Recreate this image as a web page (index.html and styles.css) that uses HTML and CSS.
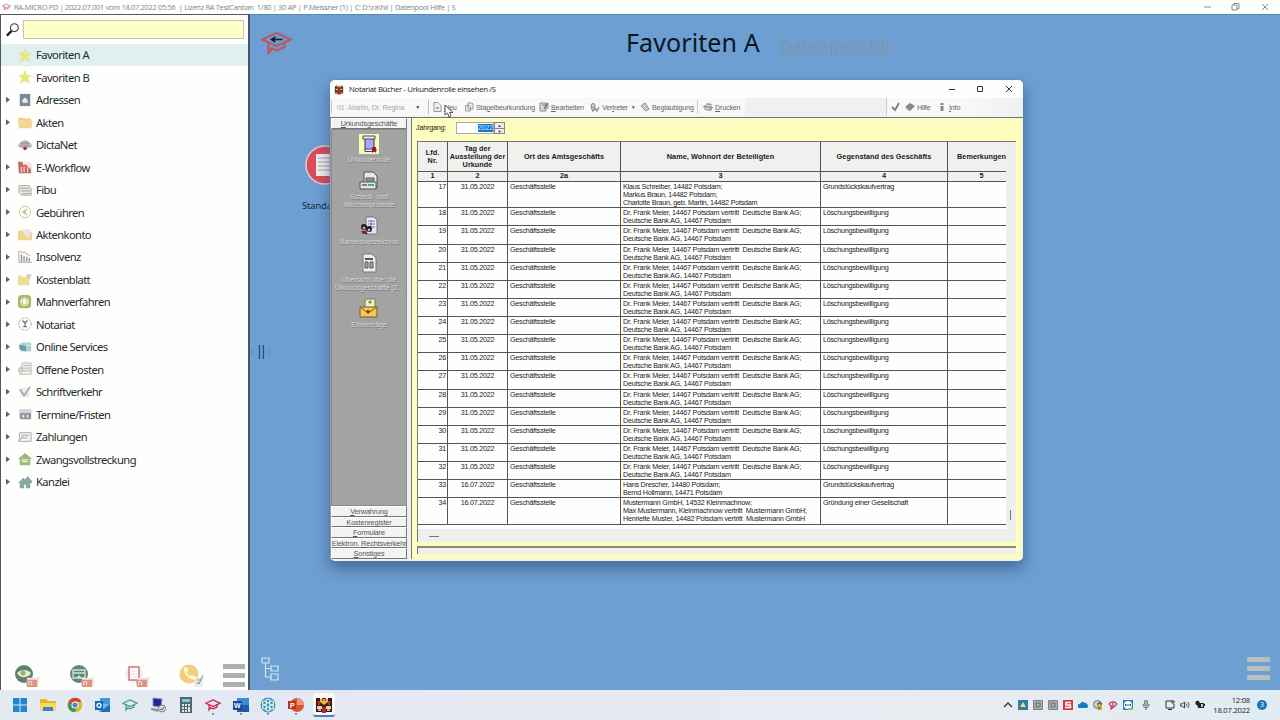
FILE: index.html
```html
<!DOCTYPE html>
<html lang="de">
<head>
<meta charset="utf-8">
<title>RA-MICRO</title>
<link rel="stylesheet" href="styles.css">
</head>
<body>
<svg class="defs">
  <symbol id="cap" viewBox="0 0 32 24"><path d="M2 8.500 16 2l14 6.500L16 15zM8 11.500V22l3.500-4.500 4.500 2 8-3.500v-4" fill="none" stroke="currentColor" stroke-width="2.400"/></symbol>
  <symbol id="star" viewBox="0 0 16 16"><path d="M8 1l2 5h5l-4 3.500 2 5.500-5-3-5 3 2-5.500L1 6h5z" fill="#eeea66" stroke="#d8d894" stroke-width=".7"/></symbol>
  <symbol id="mini" viewBox="0 0 16 14"><path d="M2 3h11l3-2-2 12H3z" fill="#f0e4df"/><path d="M1 5h12v8H2z" fill="#dc9484"/><path d="M4 7v4M7 7v4M4 7h2" stroke="#f7ded7" stroke-width="1.300"/></symbol>
</svg>

<header class="appbar">
  <svg class="appbar-logo" color="#d5495c"><use href="#cap"/></svg>
  <span class="appbar-title">RA-MICRO PD | 2022.07.001 vom 18.07.2022 05:56 &nbsp;| Lizenz RA TestCantian &nbsp;1/80 | 30 AP | P.Meissner (1) | C: D:\ra\hil | Datenpool Hilfe | S</span>
  <svg class="appbar-buttons" viewBox="0 0 64 10"><path d="M0 5h7M28 3h5v5h-5zM30 3V1.500h5v5h-2M58 2l6 6M64 2l-6 6" fill="none" stroke="#8a8a8a"/></svg>
</header>

<main class="desk">
  <nav class="side">
    <div class="search">
      <svg viewBox="0 0 16 16"><circle cx="10" cy="5.500" r="4.200" fill="none" stroke="#444" stroke-width="1.200"/><path d="M7 9l-5 5" stroke="#222" stroke-width="2.500"/></svg>
      <div class="search-field"></div>
    </div>
    <ul class="tree" id="tree"></ul>
    <div class="side-foot">
      <svg class="quick" viewBox="0 0 26 26"><circle cx="10" cy="11" r="9" fill="#5c8471"/><path d="M3 10c4-4 10-4 14 0-2 5-11 6-14 0z" fill="#e7efc8"/><circle cx="9" cy="10" r="2.500" fill="#9bab70"/><use href="#mini" x="11" y="12" width="15" height="13"/></svg>
      <svg class="quick" viewBox="0 0 26 26"><circle cx="10" cy="11" r="9" fill="#5c8879"/><path d="M4 7h12v8H4zM4 10h12" fill="none" stroke="#d2e2dc" stroke-width="1.300"/><path d="M7 15l3-3 3 3" fill="#d2e2dc"/><use href="#mini" x="11" y="12" width="15" height="13"/></svg>
      <svg class="quick" viewBox="0 0 26 26"><circle cx="10" cy="11" r="9" fill="#f5ebe8"/><path d="M5 4h10v13H5z" fill="#fff" stroke="#cf7480" stroke-width="1.500"/><path d="M7 8h6M7 11h6M7 14h6" stroke="#f0dcdc"/><use href="#mini" x="11" y="12" width="15" height="13"/></svg>
      <svg class="quick" viewBox="0 0 26 26"><circle cx="10" cy="11" r="9.500" fill="#f4cc7c"/><path d="M5 5c0 7 4 11 11 12l1-3-4-2-2 1c-2-1-3-2-3-4l1-1-1-4z" fill="#fff6e2"/><path d="M17 14h8l-2 10h-8z" fill="#e9ebe9"/><path d="M18 17h4M17 20h4M24 12l-4 9" stroke="#899391"/></svg>
      <div class="bars"><i></i><i></i><i></i></div>
    </div>
  </nav>

  <section class="stage">
    <svg class="stage-cap" viewBox="0 0 32 24" color="#b75a6d"><use href="#cap"/><path d="M11 8.500h11M15 6l-4 2.500 4 2.500" stroke="#14202e" stroke-width="1.600" fill="none"/></svg>
    <div class="headline"><h1>Favoriten A</h1><span class="pool">Datenpool hil</span></div>
    <div class="shortcut">
      <svg viewBox="0 0 40 40"><circle cx="20" cy="20" r="19" fill="#d84d58" stroke="#e9c7d2" stroke-width="1.500"/><path d="M11 9h18v22H11z" fill="#f5eeee"/><path d="M13 13h14M13 17h14M13 21h14M13 25h14" stroke="#b39a9d"/></svg>
      <span>Standard</span>
    </div>
    <svg class="splitter" viewBox="0 0 22 16"><path d="M4 5L1 8l3 3M18 5l3 3-3 3" fill="none" stroke="#5285c0"/><path d="M9.500 1v14M13.500 1v14" stroke="#2e4a66" stroke-width="1.200"/></svg>
    <svg class="hierarchy" viewBox="0 0 18 24"><path d="M1 1h7v5H1zM10 9h7v5h-7zM10 17h7v6h-7zM4.500 6v14H10M4.500 11.500H10" fill="none" stroke="#d3e4f5" stroke-width="1.200"/></svg>
    <div class="bars stage-bars"><i></i><i></i><i></i></div>
  </section>

  <div class="window">
    <div class="win-title">
      <svg viewBox="0 0 12 12"><path d="M1 2h3l1 2 1-3 1 3 2-2h2v9H1z" fill="#5b2f25"/><path d="M2 5h3v2H2zM7 5h3v2H7z" fill="#e6b14c"/><path d="M4 8h4v4H4z" fill="#c0302b"/><path d="M3 1h1v3H3zM8 1h1v3H8z" fill="#c0302b"/><path d="M2 9h1v2H2zM9 9h1v2H9z" fill="#e8dcc8"/></svg>
      <span>Notariat Bücher - Urkundenrolle einsehen /S</span>
      <svg class="win-buttons" viewBox="0 0 64 10"><path d="M0 5.500h6M28.500 2.500h5v5h-5zM57 2l6 6M63 2l-6 6" fill="none" stroke="#333"/></svg>
    </div>
    <div class="toolbar">
      <div class="tb-left">
        <div class="combo"><span>01 -Martin, Dr. Regina</span><b>▼</b></div>
        <div class="tool t1"><svg viewBox="0 0 10 10"><path d="M2 .5h4l3 3v6H2z" fill="#eee" stroke="#999"/><path d="M4 5h3v2H4z" fill="#aaa"/></svg><span><u>N</u>eu</span></div>
        <div class="tool t2"><svg viewBox="0 0 10 10"><path d="M4 1h4l1 1v5H4zM1.500 3.500h4l1 1V9h-5z" fill="#eee" stroke="#999"/></svg><span>Sta<u>p</u>elbeurkundung</span></div>
        <div class="tool t3"><svg viewBox="0 0 10 10"><path d="M1 1h6v8H1zM3 3h6v4" fill="#ddd" stroke="#888"/><path d="M9 1L5 7" stroke="#777" stroke-width="1.500"/></svg><span><u>B</u>earbeiten</span></div>
        <div class="tool t4"><svg viewBox="0 0 10 10"><circle cx="3" cy="3.500" r="2" fill="#ccc" stroke="#888"/><path d="M1 5l2 4 2-3 2 3 2-4" fill="none" stroke="#888" stroke-width="1.300"/></svg><span>Ver<u>t</u>reter</span><b>▾</b></div>
        <div class="tool t5"><svg viewBox="0 0 10 10"><path d="M1 4l4-3 4 6-3 2z" fill="#ccc" stroke="#888"/></svg><span>Be<u>g</u>laubigung</span></div>
        <div class="tool t6"><svg viewBox="0 0 10 10"><path d="M0 4l3-1 1-2 5 1-1 2 2 1-2 4-6-1z" fill="#999"/><path d="M3 3l5 1M2 6l5 1" stroke="#eee"/></svg><span><u>D</u>rucken</span></div>
      </div>
      <div class="tb-right">
        <svg class="check" viewBox="0 0 10 10"><path d="M1 5l3 3 4-7" fill="none" stroke="#69856b" stroke-width="1.800"/></svg>
        <div class="tool t7"><svg viewBox="0 0 10 10"><path d="M0 5l5-4 5 3-5 5z" fill="#888"/><path d="M1 7l4 2 4-4" fill="none" stroke="#bbb"/></svg><span>Hilfe</span></div>
        <div class="tool t8"><svg viewBox="0 0 5 10"><path d="M1 1h3v2H1zM1 4h3v5H1z" fill="#888"/></svg><span><u>I</u>nfo</span></div>
      </div>
    </div>
    <div class="win-body">
      <aside class="outlook">
        <div class="tab"><span><u>U</u>rkundsgeschäfte</span></div>
        <div class="outlook-list">
          <div class="entry e1"><svg class="lit" viewBox="0 0 20 20"><path d="M6 4h9v12H6z" fill="#a9a9f4" stroke="#33335c"/><path d="M4 2h12v3H4zM6 15h11v2.500H6z" fill="#ececff" stroke="#44446a"/><path d="M13 13h4v6l-2-2-2 2z" fill="#9c1838"/></svg><span>Urkundenrolle</span></div>
          <div class="entry e2"><svg viewBox="0 0 20 20"><path d="M5 1h9l4 4v12H5z" fill="#e8e8e8" stroke="#555"/><path d="M7 7h8v3H7z" fill="#999" stroke="#555"/><path d="M1 11h16v7H1z" fill="#d8e8dc" stroke="#555"/><path d="M3 14h5" stroke="#c03540" stroke-width="1.500"/><path d="M9 14h6" stroke="#388e62" stroke-width="1.500"/></svg><span>Scheck- und<br>Wechselproteste</span></div>
          <div class="entry e3"><svg viewBox="0 0 20 20"><path d="M7 1h8l3 3v14H7z" fill="#e6e8fa" stroke="#777"/><path d="M9 5h7M9 8h7M9 11h7M12 4v12" stroke="#7079b8"/><circle cx="5" cy="11" r="3" fill="#301b1b"/><circle cx="10" cy="13" r="3" fill="#301b1b"/><circle cx="5" cy="12" r="1.300" fill="#ddb6a0"/><circle cx="10" cy="14" r="1.300" fill="#ddb6a0"/><path d="M2 15h5l2 3H4z" fill="#712535"/></svg><span>Namensverzeichnis</span></div>
          <div class="entry e4"><svg viewBox="0 0 20 20"><path d="M4 1h9l4 4v14H4z" fill="#eee" stroke="#777"/><path d="M6 6h8" stroke="#555" stroke-width="2"/><path d="M6 9h3v6H6zM11 9h3v6h-3z" fill="#aaa" stroke="#555"/></svg><span>Übersicht über die<br>Urkundsgeschäfte (Z...</span></div>
          <div class="entry e5"><svg viewBox="0 0 20 20"><path d="M8 1h8v10H6V3z" fill="#f3f3b4" stroke="#777"/><circle cx="11" cy="4" r="1.500" fill="#777a3d"/><path d="M1 9h17v10H1z" fill="#f1c953" stroke="#755b28"/><path d="M1 9l8 6 9-6" fill="none" stroke="#755b28"/><path d="M7 13l2-1 2 1-2 3z" fill="#a11d24"/></svg><span>Erbverträge</span></div>
        </div>
        <div class="tab"><span><u>V</u>erwahrung</span></div>
        <div class="tab"><span><u>K</u>ostenregister</span></div>
        <div class="tab"><span><u>F</u>ormulare</span></div>
        <div class="tab"><span>Elektron. <u>R</u>echtsverkehr</span></div>
        <div class="tab"><span><u>S</u>onstiges</span></div>
      </aside>
      <div class="content">
        <div class="year"><label>Jahrgang:</label><div class="year-field"><span>2022</span></div><div class="spin"><b>▲</b><b>▼</b></div></div>
        <div class="grid-box">
          <div class="grid" id="grid">
            <div class="row head"><div>Lfd.<br>Nr.</div><div>Tag der<br>Ausstellung der<br>Urkunde</div><div>Ort des Amtsgeschäfts</div><div>Name, Wohnort der Beteiligten</div><div>Gegenstand des Geschäfts</div><div>Bemerkungen</div></div>
            <div class="row nums"><div>1</div><div>2</div><div>2a</div><div>3</div><div>4</div><div>5</div></div>
          </div>
          <div class="vscroll"><i></i></div>
          <div class="hscroll"><i></i></div>
        </div>
        <div class="status"></div>
      </div>
    </div>
    <svg class="cursor" viewBox="0 0 10 14"><path d="M1 1v10l2.500-2 1.500 4 2-1-1.500-3.500H9z" fill="#fff" stroke="#444" stroke-width=".9"/></svg>
  </div>
</main>

<footer class="taskbar">
  <div class="apps">
    <svg viewBox="0 0 16 16"><path d="M1 1h6.500v6.500H1zM8.500 1H15v6.500H8.500zM1 8.500h6.500V15H1zM8.500 8.500H15V15H8.500z" fill="#1f87d3"/></svg>
    <svg viewBox="0 0 16 16"><path d="M0 2h6l2 2h8v10H0z" fill="#e9b72e"/><path d="M0 6h16v8H0z" fill="#fbd75f"/><path d="M3 10h10v4H3z" fill="#3b83bd"/></svg>
    <svg viewBox="0 0 16 16"><circle cx="8" cy="8" r="7.300" fill="#ddb92c"/><path d="M1.700 4.300A7.300 7.300 0 0 1 14.500 4.700H8L5 10z" fill="#d64437"/><path d="M1.700 4.300A7.300 7.300 0 0 0 7.500 15.300L11 9.500 5 10z" fill="#429656"/><circle cx="8" cy="8" r="3.500" fill="#fff"/><circle cx="8" cy="8" r="2.600" fill="#4485d8"/></svg>
    <svg viewBox="0 0 16 16"><path d="M5 1h10v8H5z" fill="#3c9bdc"/><path d="M4 7l11 0v8H4z" fill="#67b9eb"/><path d="M5 15l10-8v8z" fill="#1a6fb8"/><path d="M0 4h8v9H0z" fill="#1466ae"/><circle cx="4" cy="8.500" r="2" fill="none" stroke="#fff" stroke-width="1.300"/></svg>
    <svg color="#3e9c83"><use href="#cap"/></svg>
    <svg viewBox="0 0 16 16"><path d="M3 1l9 1-1 8-8-1z" fill="#1f2797" stroke="#8890b4"/><path d="M1 11l8 1-1 3-7-2z" fill="#8b92a0"/><circle cx="12" cy="11.500" r="3.500" fill="#dce3e9" stroke="#76808a"/><path d="M10 12l2 1 2-3" fill="none" stroke="#556"/></svg>
    <svg viewBox="0 0 16 16"><path d="M2 0h12v16H2z" fill="#53656f"/><path d="M4 2h8v3H4z" fill="#71d3de"/><path d="M4 7h2v2H4zM7 7h2v2H7zM10 7h2v2h-2zM4 10h2v2H4zM7 10h2v2H7zM10 10h2v5h-2zM4 13h2v2H4zM7 13h2v2H7z" fill="#dce7eb"/></svg>
    <svg class="open" color="#cf1744"><use href="#cap"/></svg>
    <svg class="open" viewBox="0 0 16 16"><path d="M4 1h12v14H4z" fill="#3c8bd5"/><path d="M4 8h12v7H4z" fill="#195bae"/><path d="M0 4h9v9H0z" fill="#134b96"/><text x="1" y="11" class="glyph">W</text></svg>
    <svg class="open" viewBox="0 0 16 16"><circle cx="8" cy="8" r="7.500" fill="#3d96ad"/><g fill="none" stroke="#e9f5f8" stroke-width="1.200"><circle cx="8" cy="4" r="2"/><circle cx="8" cy="12" r="2"/><circle cx="4.500" cy="6" r="2"/><circle cx="11.500" cy="6" r="2"/><circle cx="4.500" cy="10" r="2"/><circle cx="11.500" cy="10" r="2"/></g></svg>
    <svg class="open" viewBox="0 0 16 16"><circle cx="9" cy="8" r="7" fill="#d95637"/><path d="M9 1a7 7 0 0 1 7 7H9z" fill="#ef9276"/><path d="M0 4h8v8H0z" fill="#b5371d"/><text x="2" y="10.500" class="glyph">P</text></svg>
    <div class="active"><svg viewBox="0 0 16 16"><path d="M0 1h4v3h2V1h4v3h2V1h4v14H0z" fill="#381d1a"/><path d="M4 2h8v3l-4 3-4-3z" fill="#e3ba48"/><path d="M6 1h1v3H6zM9 1h1v3H9z" fill="#c8321f"/><path d="M2 4h2v4H2zM12 4h2v4h-2z" fill="#c8321f"/><path d="M1 9h5v3H1zM10 9h5v3h-5z" fill="#e9d3a5"/><path d="M6 10h4v6H6z" fill="#b42a22"/><path d="M2 13h3M11 13h3" stroke="#ddd" stroke-width="1.500"/></svg></div>
  </div>
  <div class="tray">
    <svg viewBox="0 0 10 10"><path d="M1 7l4-4 4 4" fill="none" stroke="#333" stroke-width="1.300"/></svg>
    <svg viewBox="0 0 10 10"><path d="M0 0h10v10H0z" fill="#2e7fa0"/><path d="M5 2l3 5H2z" fill="#f5d97f"/></svg>
    <svg viewBox="0 0 10 10"><path d="M.5.5h9v9h-9z" fill="#a5adb0" stroke="#7d8588"/><path d="M3 3h4v4H3z" fill="none" stroke="#697175"/></svg>
    <svg viewBox="0 0 10 10"><path d="M.5.5h9v9h-9z" fill="#a5adb0" stroke="#7d8588"/><path d="M3 3h4v4H3z" fill="none" stroke="#697175"/></svg>
    <svg viewBox="0 0 10 10"><path d="M0 0h10v10H0z" fill="#d83846"/><path d="M8 2.500H3v2.500h4.500v2.500H2" fill="none" stroke="#fff" stroke-width="1.400"/></svg>
    <svg viewBox="0 0 10 10"><path d="M1 8a2 2 0 0 1 1-4 3 3 0 0 1 5-1c2 0 3 2 3 4l-1 1z" fill="#1678bd"/></svg>
    <svg viewBox="0 0 10 10"><circle cx="4.500" cy="4.500" r="4" fill="#ced4cd" stroke="#6b736b"/><path d="M4 5h5v5H4z" fill="#c8ad42"/><path d="M5 5V3h3v2M6 7v2" fill="none" stroke="#333"/></svg>
    <svg viewBox="0 0 10 10"><path d="M1 4c2-3 6-3 8 0-2 3-6 3-8 0zM3 6v3l4-3" fill="none" stroke="#c43d62" stroke-width="1.300"/><circle cx="5" cy="4" r="1" fill="#c43d62"/></svg>
    <svg viewBox="0 0 10 10"><path d="M0 0h10v10H0z" fill="#2684c4"/><circle cx="5" cy="5" r="4" fill="#fff"/><path d="M2 5h6M3 4L2 5l1 1M7 4l1 1-1 1" fill="none" stroke="#1c6aa6"/><path d="M5 8h5v2H5z" fill="#8ccb3c"/></svg>
    <svg class="mic" viewBox="0 0 10 10"><rect x="3.500" y="0" width="3" height="6" rx="1.500" fill="#a8b0b9" stroke="#555f6b" stroke-width=".7"/><path d="M2 4c0 5 6 5 6 0M5 8v2" fill="none" stroke="#555f6b"/></svg>
    <svg class="net" viewBox="0 0 10 10"><path d="M7 1H1v7h8V4M3 9.500h4" fill="none" stroke="#333"/><circle cx="8" cy="2" r="1.300" fill="none" stroke="#333"/></svg>
    <svg viewBox="0 0 10 10"><path d="M0 4h2l2.500-2v6L2 6H0zM6 3.500c1 1 1 2 0 3M7.500 2c2 2 2 4 0 6" fill="none" stroke="#333" stroke-width=".9"/></svg>
    <svg viewBox="0 0 10 10"><path d="M2 3h7v5H3z" fill="#222"/><path d="M9 4h1v2H9z" fill="#222"/><circle cx="2.500" cy="3" r="2.200" fill="#222"/><path d="M6 4h2v3H6z" fill="#bcc8d0"/></svg>
    <div class="clock">12:08<br>18.07.2022</div>
    <div class="count">3</div>
  </div>
</footer>
<script src="script.js"></script>
</body>
</html>
```
FILE: styles.css
```css
* { box-sizing: border-box; }
body { margin: 0; width: 1280px; height: 720px; overflow: hidden; display: flex; flex-direction: column; font-family: "Noto Sans", sans-serif; color: #252a2e; background: #6d9fd2; }
svg { display: block; flex: none; }
.defs { position: absolute; width: 0; height: 0; }
u { text-underline-offset: 1px; text-decoration-thickness: 1px; }

.appbar { height: 14px; display: flex; align-items: center; background: #fdfefe; padding: 0 12px 0 2px; flex: none; }
.appbar-logo { width: 9px; height: 8px; }
.appbar-title { margin-left: 3px; font: 7.5px/14px "Open Sans", sans-serif; color: #858585; white-space: nowrap; letter-spacing: -.33px; }
.appbar-buttons { width: 64px; height: 10px; margin-left: auto; }

.desk { flex: 1; display: flex; position: relative; min-height: 0; }
.side { width: 250px; flex: none; background: #fefffc; border: 1px solid #55595d; border-bottom: 0; border-right: 2px solid #45566a; display: flex; flex-direction: column; }
.search { display: flex; padding: 5px 4px 0 4px; gap: 3px; height: 28.5px; }
.search svg { width: 15px; height: 16px; margin-top: 2px; }
.search-field { width: 221px; height: 19px; background: #ffffc9; border: 1px solid #c5c5a8; }
.tree { list-style: none; margin: 0; padding: 0; flex: 1; }
.tree li { height: 22.47px; display: flex; align-items: center; padding-left: 5px; font-size: 11.2px; letter-spacing: -.58px; white-space: nowrap; }
.tree li.on { background: #dff0ef; }
.tree .arr { width: 4px; height: 6px; margin-right: 8px; }
.tree .arr.sub { background: #5d6468; clip-path: polygon(0 0, 100% 50%, 0 100%); }
.tree .ico { width: 14px; height: 14px; margin-right: 4px; }
.side-foot { height: 32px; display: flex; padding: 0 3px 0 13px; margin-bottom: -1px; }
.quick { width: 26px; height: 26px; margin-right: 29px; margin-top: 4px; }
.side-foot .quick:nth-child(4) { margin-right: 18px; }
.bars { width: 23px; display: flex; flex-direction: column; gap: 4px; padding-top: 5px; }
.bars i { height: 5px; background: #aeb0b0; flex: none; }

.stage { flex: 1; position: relative; background: #6d9fd2; border-top: 1px solid #5d86b1; }
.stage-cap { position: absolute; left: 10px; top: 16px; width: 33px; height: 24px; }
.headline { display: flex; align-items: baseline; padding: 10px 0 0 376px; }
h1 { margin: 0; font: 400 25px/34px "Noto Sans", sans-serif; color: #0b1520; letter-spacing: .1px; width: 154px; white-space: nowrap; }
.pool { font-size: 17px; letter-spacing: .2px; color: #8494a4; text-decoration: underline; white-space: nowrap; }
.shortcut { position: absolute; left: 52px; top: 130px; width: 60px; }
.shortcut svg { width: 40px; height: 40px; margin-left: 3px; }
.shortcut span { display: block; font-size: 9.3px; line-height: 14px; margin-top: 14px; color: #14283b; letter-spacing: -.1px; }
.splitter { position: absolute; left: 0; top: 329px; width: 22px; height: 16px; }
.hierarchy { position: absolute; left: 11px; top: 642px; width: 18px; height: 24px; }
.stage-bars { position: absolute; left: 997px; top: 637px; }
.stage-bars i { background: #b8c0bd; }

.window { position: absolute; left: 330px; top: 66px; width: 693px; height: 481px; background: #f0f1f1; border-radius: 5px; box-shadow: 0 0 0 1px #64829f55, 0 7px 14px 1px #26436b88; overflow: hidden; display: flex; flex-direction: column; font-family: "Liberation Sans", Arial, sans-serif; }
.win-title { height: 18px; flex: none; background: #fdfefe; display: flex; align-items: center; padding: 0 10px 0 4px; font: 7.8px/18px "Open Sans", sans-serif; color: #222; letter-spacing: -.34px; }
.win-title > svg:first-child { width: 10px; height: 11px; margin-right: 5px; }
.win-buttons { width: 64px; height: 10px; margin-left: auto; }
.toolbar { height: 20px; flex: none; display: flex; justify-content: space-between; align-items: flex-start; background: #eef0f1; border-bottom: 1px solid #73756e; font-size: 7.2px; letter-spacing: -.2px; color: #666; padding: 0 1px; }
.tb-left, .tb-right { height: 18px; display: flex; align-items: center; background: #f7f8f7; white-space: nowrap; }
.tb-left { width: 414px; }
.combo { width: 98px; height: 14px; border-left: 1px solid #ccc; border-right: 1px solid #bbb; display: flex; align-items: center; padding-left: 5px; color: #aaa; letter-spacing: -.13px; }
.combo b { margin-left: auto; margin-right: 8px; font-size: 5px; color: #333; }
.tool { display: flex; align-items: center; height: 14px; }
.tool svg { width: 10px; height: 10px; margin-right: 2px; }
.tool b { font-size: 5px; margin-left: 4px; }
.t1 { width: 31px; padding-left: 3px; }
.t2 { width: 79px; padding-left: 4px; letter-spacing: -.2px; }
.t3 { width: 51px; }
.t4 { width: 49px; }
.t5 { width: 59px; padding-left: 1px; border-right: 1px solid #ccc; letter-spacing: -.19px; }
.t6 { padding-left: 5px; }
.tb-right { width: 136px; border-left: 1px solid #ccc; padding-left: 4px; background: linear-gradient(90deg, #f7f8f7 60%, #eef0f1); }
.check { width: 10px; height: 10px; margin-right: 4px; }
.t7 { width: 34px; }
.t8 svg { width: 6px; margin-right: 4px; }
.cursor { position: absolute; left: 114px; top: 24px; width: 10px; height: 14px; }

.win-body { flex: 1; display: flex; min-height: 0; padding: 0 1px 2px 0; }
.outlook { width: 78px; flex: none; display: flex; flex-direction: column; background: #f0f0ef; border-left: 1px solid #999; padding-right: 1px; }
.tab { height: 10.6px; flex: none; background: #f3f3f2; border: 1px solid #fff; border-right-color: #777; border-bottom-color: #777; font-size: 7.3px; line-height: 9px; text-align: center; color: #555; white-space: nowrap; letter-spacing: -.14px; display: flex; justify-content: center; }
.outlook-list { flex: 1; background: #a3a3a3; border: 1px solid #8b8b8b; min-height: 0; }
.entry { display: flex; flex-direction: column; align-items: center; text-align: center; font-size: 7px; line-height: 8px; color: #d6d6d6; white-space: nowrap; text-shadow: .5px .5px 0 #777; letter-spacing: -.1px; }
.entry svg { width: 20px; height: 20px; margin-bottom: 2px; }
.entry .lit { background: #fafab4; }
.e1 { height: 37px; padding-top: 4px; }
.e2 { height: 45px; padding-top: 4px; }
.e3 { height: 37px; padding-top: 4px; }
.e4 { height: 46px; padding-top: 4px; }
.e4 svg { margin-bottom: 3px; }
.e5 { padding-top: 3px; }
.e5 svg { margin-bottom: 3px; }

.content { flex: 1; margin-left: 3px; background: #fdfdc0; border-left: 1px solid #777; padding: 3px 6px 0 5px; display: flex; flex-direction: column; min-width: 0; }
.year { display: flex; align-items: center; height: 13px; flex: none; font-size: 7.2px; letter-spacing: -.2px; color: #222; margin-left: -1px; }
.year label { width: 40px; }
.year-field { width: 38px; height: 12px; background: #fff; border: 1px solid #aaa; display: flex; justify-content: flex-end; align-items: center; }
.year-field span { background: #1974cc; color: #cfe7fa; line-height: 8px; }
.spin { width: 11px; height: 12px; background: #eee; border: 1px solid #888; display: flex; flex-direction: column; }
.spin b { font-size: 4px; line-height: 5px; height: 5px; text-align: center; }
.spin b + b { border-top: 1px solid #888; }
.grid-box { margin-top: 7px; height: 401px; flex: none; display: grid; grid-template: 387px 14px / 588px 1fr; background: #eeeeec; border-left: 1px solid #777; border-top: 1px solid #777; }
.grid { background: #fefefe; color: #1b1b1b; font-size: 7.2px; line-height: 8.07px; letter-spacing: -.24px; overflow: hidden; }
.row { display: grid; grid-template-columns: 30px 60px 113px 200px 127px 58px; height: 18.13px; border-bottom: 1px solid #555; white-space: nowrap; }
.row > div { border-right: 1px solid #555; padding: 1px 2px 0; white-space: pre; overflow: hidden; }
.row > div:last-child { border-right: 0; }
.row > div:nth-child(1) { text-align: right; padding-right: 1px; }
.row > div:nth-child(2) { text-align: center; }
.row.tall { height: 26.3px; }
.row.head, .row.nums { background: #f0f0ef; font-weight: 700; font-size: 7.3px; letter-spacing: .03px; }
.row.head > div, .row.nums > div { display: flex; align-items: center; justify-content: center; text-align: center; padding: 0; overflow: visible; }
.row.head { height: 30px; }
.row.head > div { padding-top: 1px; }
.row.head > div:last-child, .row.nums > div:last-child { padding-left: 9px; }
.row.nums { height: 10px; }
.vscroll { display: flex; justify-content: center; align-items: flex-end; padding-bottom: 9px; padding-right: 2px; }
.vscroll i { width: 1px; height: 10px; background: #777; }
.hscroll { grid-column: 1 / 3; padding: 7px 11px; }
.hscroll i { display: block; width: 10px; height: 1px; background: #777; }
.status { height: 8px; margin-top: 4px; background: #eeeeec; border-top: 2px solid #89897c; border-left: 1px solid #777; flex: none; }

.taskbar { height: 30px; flex: none; background: linear-gradient(90deg, #e4eaf2, #e3e8f3 25%, #e8ecf1 75%, #e0ecf3); display: flex; justify-content: space-between; align-items: center; padding: 0 12px; }
.apps { display: flex; gap: 11.6px; align-items: center; }
.apps > svg { width: 16px; height: 16px; overflow: visible; }
.apps > .open { box-shadow: 0 8.5px 0 -7px #777; }
.glyph { font: 700 7px "Liberation Sans", sans-serif; fill: #fff; }
.active { width: 22px; height: 24px; background: #f8f8f9; border-radius: 3px; padding: 4px 3px 0; margin-left: -3px; border-bottom: 2px solid #467fad; }
.active svg { width: 16px; height: 16px; }
.tray { display: flex; align-items: center; gap: 5px; padding-right: 1px; }
.tray svg { width: 10px; height: 10px; }
.tray .mic { margin-left: 3px; }
.tray .net { margin-left: 9px; }
.tray svg:nth-last-of-type(-n+3) { width: 10px; }
.clock { width: 40px; text-align: right; font: 7.6px/10px "Open Sans", sans-serif; color: #222; letter-spacing: -.2px; }
.count { width: 10px; height: 10px; margin-left: 2px; border-radius: 50%; background: #1475be; color: #fff; font-size: 7px; line-height: 10px; text-align: center; }
```
FILE: script.js
```js
const icons = {
  star: '<use href="#star"/>',
  address: '<path d="M2 1h12v14H2z" fill="#7d8990"/><path d="M5 11V8l3-3 3 3v3z" fill="#e6ecef"/>',
  folder: '<path d="M0 3h6l2 1h7v11H1z" fill="#f2cd83"/><path d="M1 6h15v8H1z" fill="#f5d898"/>',
  dicta: '<path d="M0 10C1 1 15 1 16 10l-5 2H5z" fill="#c3bec3"/><path d="M2 9h12M3 6h10M5 3v7M8 2v9M11 3v7" stroke="#8b858b" stroke-width=".7"/><circle cx="8" cy="12" r="2" fill="#b32248"/>',
  flow: '<path d="M0 2h5l1 3h9v10H1z" fill="#c86a62"/><path d="M5 1l10 2v8" fill="#eee6e2"/><path d="M4 8v6M7 7v7M11 8v6" stroke="#f3c8c3" stroke-width="1.500"/>',
  fibu: '<path d="M1 3h12l2 4v7H4l-3-3z" fill="#e9eae0" stroke="#a5aca7"/><path d="M2 6h11M3 9h11M5 12h9" stroke="#98a19a"/>',
  euro: '<circle cx="8" cy="8" r="6.500" fill="#fdfdf2" stroke="#c5c79b"/><path d="M11 5.500c-5-2-6 7 0 5M5 7.500h4M5 9h4" fill="none" stroke="#a9ae93"/>',
  account: '<path d="M0 4h6l2 2h8v9H0z" fill="#f0d58b"/><path d="M6 2l9 1-2 10-7-5z" fill="#e6e8e8"/>',
  chart: '<path d="M1 1v13h15" fill="none" stroke="#a09ca3"/><path d="M4 13V5M7 13V7M10 13V8M13 13V9" stroke="#9a92a2" stroke-width="1.700"/><path d="M2 2l6 1 6 4" fill="none" stroke="#d98a93"/>',
  cost: '<path d="M0 4h5l1 2h7v9H0z" fill="#eadf8d"/><path d="M8 5l3-3 5 1-3 6z" fill="#cbd4d0"/>',
  dunning: '<rect width="15" height="15" rx="4" fill="#a7bd5d"/><circle cx="7.500" cy="7.500" r="5" fill="#eef3d5"/><path d="M5 4h5v7H5z" fill="#fff" stroke="#b6c68a"/>',
  notary: '<circle cx="8" cy="8" r="7" fill="#fff" stroke="#aaa9a2" stroke-dasharray="3 1"/><path d="M5 4l3 3 3-3M8 5v6M6 11h4" fill="none" stroke="#706f6a" stroke-width="1.300"/>',
  online: '<path d="M3 3h12v10H3z" fill="#a9ced6"/><path d="M1 5l8 2v6l-7-2z" fill="#659daa"/><path d="M10 6h4" stroke="#fff"/>',
  open: '<path d="M5 1h10v13H2z" fill="#eef0ec" stroke="#b2b8b2"/><path d="M6 4h8M5 7h9M4 10h10" stroke="#b0b8b0"/><circle cx="3" cy="9" r="2.500" fill="#d5ded1" stroke="#a7b1a3"/>',
  letter: '<path d="M3 3h10v11H3z" fill="#e9ecea"/><path d="M2 5l5 7 7-10" fill="none" stroke="#a5afa8" stroke-width="2"/>',
  calendar: '<path d="M2 3h13v11H2z" fill="#9096a2"/><path d="M2 3h13v4H2z" fill="#d3d5da"/><path d="M5 9h2v3H5zM10 9h2v3h-2z" fill="#e6e8ee"/>',
  pay: '<path d="M2 3h13v10H1z" fill="#f0f1f0" stroke="#a0a5a6"/><path d="M4 6h9M3 9h8M1 13l5-6" stroke="#a0a5a6"/>',
  house: '<path d="M0 8l8-7 8 7h-2v7H2V8z" fill="#a0b873"/><path d="M4 9h8M5 11h6" stroke="#edf2df" stroke-width="1.500"/>',
  office: '<path d="M0 9l6-6 2 2 3-4 5 6v2h-2v6H9v-4H7v4H2V9z" fill="#87aaa1"/>'
};
const entries = [
  ['star', 'Favoriten A'], ['star', 'Favoriten B'], ['address', 'Adressen'], ['folder', 'Akten'],
  ['dicta', 'DictaNet'], ['flow', 'E-Workflow'], ['fibu', 'Fibu'], ['euro', 'Gebühren'],
  ['account', 'Aktenkonto'], ['chart', 'Insolvenz'], ['cost', 'Kostenblatt'], ['dunning', 'Mahnverfahren'],
  ['notary', 'Notariat'], ['online', 'Online Services'], ['open', 'Offene Posten'], ['letter', 'Schriftverkehr'],
  ['calendar', 'Termine/Fristen'], ['pay', 'Zahlungen'], ['house', 'Zwangsvollstreckung'], ['office', 'Kanzlei']
];
const leaves = ['Favoriten A', 'Favoriten B', 'DictaNet'];
document.getElementById('tree').innerHTML = entries.map(([icon, name], i) =>
  `<li class="${i === 0 ? 'on' : ''}"><i class="arr ${leaves.includes(name) ? '' : 'sub'}"></i><svg class="ico" viewBox="0 0 16 16">${icons[icon]}</svg><span>${name}</span></li>`
).join('');

const bank = 'Dr. Frank Meier, 14467 Potsdam vertritt  Deutsche Bank AG;\nDeutsche Bank AG, 14467 Potsdam';
const records = [[17, '31.05.2022', 'Klaus Schreiber, 14482 Potsdam;\nMarkus Braun, 14482 Potsdam;\nCharlotte Braun, geb. Martin, 14482 Potsdam', 'Grundstückskaufvertrag']];
for (let n = 18; n <= 32; n++) records.push([n, '31.05.2022', bank, 'Löschungsbewilligung']);
records.push([33, '16.07.2022', 'Hans Drescher, 14480 Potsdam;\nBernd Hollmann, 14471 Potsdam', 'Grundstückskaufvertrag']);
records.push([34, '16.07.2022', 'Mustermann GmbH, 14532 Kleinmachnow;\nMax Mustermann, Kleinmachnow vertritt  Mustermann GmbH;\nHenriette Muster, 14482 Potsdam vertritt  Mustermann GmbH', 'Gründung einer Gesellschaft']);
document.getElementById('grid').insertAdjacentHTML('beforeend', records.map(([nr, date, people, subject]) =>
  `<div class="row ${people.split('\n').length > 2 ? 'tall' : ''}"><div>${nr}</div><div>${date}</div><div>Geschäftsstelle</div><div>${people}</div><div>${subject}</div><div></div></div>`
).join(''));
```
